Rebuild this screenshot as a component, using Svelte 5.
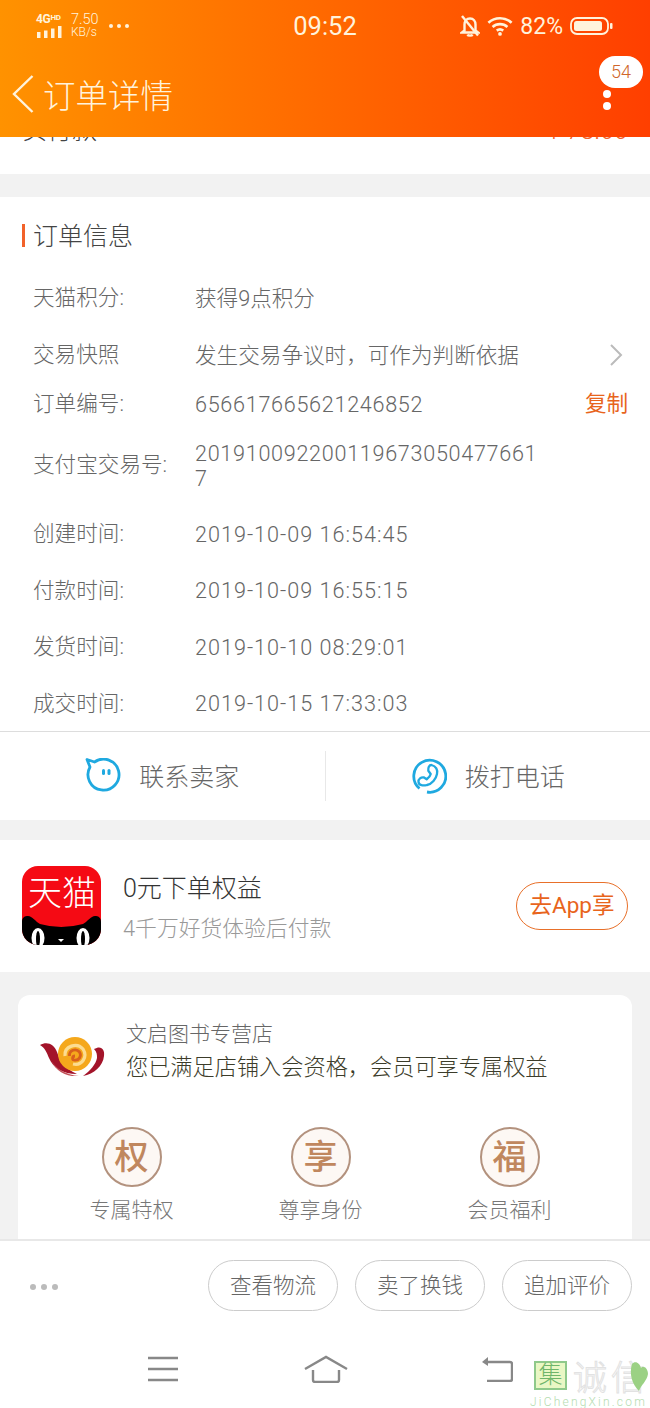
<script>
	const rows = [
		{ label: "天猫积分:", value: "获得9点积分" },
		{ label: "交易快照", value: "发生交易争议时，可作为判断依据", arrow: true, size: "snap" },
		{ label: "订单编号:", value: "656617665621246852", copy: true, kind: "num", size: "short" },
		{ label: "支付宝交易号:", value: "2019100922001196730504776617", kind: "num", size: "tall" },
		{ label: "创建时间:", value: "2019-10-09 16:54:45", kind: "time", size: "timed" },
		{ label: "付款时间:", value: "2019-10-09 16:55:15", kind: "time", size: "timed" },
		{ label: "发货时间:", value: "2019-10-10 08:29:01", kind: "time", size: "timed" },
		{ label: "成交时间:", value: "2019-10-15 17:33:03", kind: "time", size: "timed" }
	];
	const perks = [
		{ glyph: "权", label: "专属特权" },
		{ glyph: "享", label: "尊享身份" },
		{ glyph: "福", label: "会员福利" }
	];
	const actions = ["查看物流", "卖了换钱", "追加评价"];
</script>

<div class="page">
	<header>
		<div class="status">
			<div class="status-left">
				<div class="net">
					<span class="net-type">4G<sup>HD</sup></span>
					<svg width="27" height="12" viewBox="0 0 27 12">
						<rect x="1" y="6" width="3.5" height="6" fill="#fff3dc" />
						<rect x="8" y="4.500" width="3.5" height="7.500" fill="#fff3dc" />
						<rect x="15" y="2.500" width="3.5" height="9.500" fill="#fff3dc" />
						<rect x="22" y="0" width="3.5" height="12" fill="#fff3dc" />
					</svg>
				</div>
				<div class="speed"><span>7.50</span><span class="unit">KB/s</span></div>
				<div class="status-dots"><i></i><i></i><i></i></div>
			</div>
			<div class="clock">09:52</div>
			<div class="status-right">
				<svg width="20" height="22" viewBox="0 0 20 22" fill="none" stroke="#fff3dc" stroke-width="2.400">
					<path d="M4.500 15.500V9.500C4.500 6 6.500 3.500 10 3.500S15.500 6 15.500 9.500V15.500L18 17.500H2Z" />
					<path d="M7.500 19.500C8 21 12 21 12.500 19.500" />
					<path d="M2 1L18 20.500" />
				</svg>
				<svg width="26" height="22" viewBox="0 0 28 22" fill="none" stroke="#fff3dc" stroke-width="2.800">
					<path d="M1.500 7.500C8.500 1 19.500 1 26.500 7.500" />
					<path d="M6 12C10.500 8 17.500 8 22 12" />
					<path d="M10.500 16C12.500 14.500 15.500 14.500 17.500 16" />
					<circle cx="14" cy="19.500" r="2" fill="#fff3dc" stroke="none" />
				</svg>
				<span class="pct">82%</span>
				<svg width="43" height="18" viewBox="0 0 43 18">
					<rect x="1" y="1" width="37" height="16" rx="6" fill="none" stroke="#fff3dc" stroke-width="1.800" />
					<rect x="4" y="4" width="28" height="10" rx="2.500" fill="#fff3dc" />
					<rect x="40" y="6" width="2.500" height="6" rx="1" fill="#fff3dc" />
				</svg>
			</div>
		</div>
		<div class="nav">
			<svg class="back" width="22" height="38" viewBox="0 0 22 38" fill="none" stroke="#fff3dc" stroke-width="2.400">
				<path d="M20.500 1L2 19L20.500 37" />
			</svg>
			<h1>订单详情</h1>
			<div class="more">
				<span class="badge">54</span>
				<i></i><i></i>
			</div>
		</div>
	</header>

	<div class="scroll">
		<div class="clipped">
			<div class="clipped-row"><span>实付款</span><span class="price">¥ 78.00</span></div>
		</div>

		<section class="info">
			<h2>订单信息</h2>
			{#each rows as row}
				<div class="row {row.size ?? ''}">
					<span class="label">{row.label}</span>
					<span class="value {row.kind ?? ''}">{row.value}</span>
					{#if row.copy}
						<span class="copy">复制</span>
					{/if}
					{#if row.arrow}
						<svg class="chev" width="14" height="24" viewBox="0 0 14 24" fill="none" stroke="#bbb" stroke-width="2">
							<path d="M2 2L12 12L2 22" />
						</svg>
					{/if}
				</div>
			{/each}
		</section>

		<section class="contact">
			<div class="contact-item">
				<svg width="36" height="36" viewBox="0 0 36 36" fill="none" stroke="#1fa9e0" stroke-width="2.800">
					<path d="M2 1.500L9.500 4A15.500 15.500 0 1 1 5 9Z" stroke-linejoin="round" />
					<rect x="17" y="11" width="3" height="6" rx="1.500" fill="#1fa9e0" stroke="none" />
					<rect x="22.500" y="11" width="3" height="6" rx="1.500" fill="#1fa9e0" stroke="none" />
				</svg>
				<span>联系卖家</span>
			</div>
			<div class="contact-item">
				<svg width="36" height="36" viewBox="0 0 36 36" fill="none" stroke="#1fa9e0" stroke-width="2.800">
					<path d="M8.500 30.500A16 16 0 1 1 16 34" />
					<path d="M20.500 7C25 8 27 12 26 16C25 21 21 26 16 27C12 28 8 27.500 7.500 24C7.200 21 10 19 13 19.500L15.700 21.300C17.500 20 19.300 18 19.700 16L17.300 12.700C17 10 18 7 20.500 7Z" stroke-width="2.300" stroke-linejoin="round" />
				</svg>
				<span>拨打电话</span>
			</div>
		</section>

		<section class="promo">
			<div class="tmall">
				<svg width="79" height="79" viewBox="0 0 79 79">
					<path d="M0 56C0 51 3 50 6 50C10 50 14 56 18 58Q39 64 61 58C65 56 69 50 73 50C76 50 79 51 79 56V79H0Z" fill="#000" />
					<ellipse cx="16" cy="72" rx="6.500" ry="10" fill="#fff" />
					<ellipse cx="61" cy="72" rx="6.500" ry="10" fill="#fff" />
					<ellipse cx="16" cy="73" rx="2" ry="8" fill="#000" />
					<ellipse cx="61" cy="73" rx="2" ry="8" fill="#000" />
					<path d="M36 73H42L39 76Z" fill="#fff" />
				</svg>
				<span>天猫</span>
			</div>
			<div class="promo-text">
				<div class="promo-title">0元下单权益</div>
				<div class="promo-sub">4千万好货体验后付款</div>
			</div>
			<div class="promo-btn">去App享</div>
		</section>

		<section class="member">
			<div class="store">
				<svg width="66" height="42" viewBox="0 0 66 42">
					<path d="M1 9C8 5 15 8 18 16C21 25 25 32 38 38C24 38 14 32 10 22C8 17 6 12 1 9Z" fill="#a3142a" />
					<path d="M12 24C17 33 27 39 40 40C28 41 17 36 12 24Z" fill="#c25058" />
					<path d="M55 13C62 9 66 13 65 20C64 30 55 38 44 40C51 35 57 28 58 22C58 19 58 16 55 13Z" fill="#a3142a" />
					<circle cx="36" cy="18" r="17" fill="#f5a81c" />
					<path d="M26 20C25 10 38 6 44 13C49 21 43 30 34 28" fill="none" stroke="#fcdc90" stroke-width="3.200" />
					<path d="M30.500 20C30 14 37 12 40.500 16C43 20 40 25 35 24C33 23.500 33 20 36 20" fill="none" stroke="#d9601c" stroke-width="2.800" />
				</svg>
				<div class="store-text">
					<div class="store-name">文启图书专营店</div>
					<div class="store-msg">您已满足店铺入会资格，会员可享专属权益</div>
				</div>
			</div>
			<div class="perks">
				{#each perks as perk}
					<div class="perk">
						<div class="perk-ring">{perk.glyph}</div>
						<div class="perk-label">{perk.label}</div>
					</div>
				{/each}
			</div>
		</section>
	</div>

	<footer>
		<div class="foot-dots"><i></i><i></i><i></i></div>
		<div class="foot-btns">
			{#each actions as action}
				<div class="foot-btn">{action}</div>
			{/each}
		</div>
	</footer>

	<div class="sysnav">
		<svg width="32" height="26" viewBox="0 0 32 26" stroke="#888" stroke-width="2.600">
			<path d="M1 2H31M1 13H31M1 24H31" />
		</svg>
		<svg width="44" height="28" viewBox="0 0 44 28" fill="none" stroke="#888" stroke-width="2.400">
			<path d="M1 14L22 2L43 14" />
			<path d="M9 15V25C9 26 10 27 11 27H33C34 27 35 26 35 25V15" />
		</svg>
		<svg width="32" height="26" viewBox="0 0 32 26" fill="none" stroke="#888" stroke-width="2.400">
			<path d="M5 6H29C30 6 31 7 31 8V23C31 24 30 25 29 25H6" />
			<path d="M1 6L7 1V10Z" fill="#888" stroke="none" />
		</svg>
	</div>

	<div class="mark">
		<div class="mark-top">
			<span class="mark-box">集</span>
			<span class="mark-word">诚信</span>
			<svg class="leaf" width="20" height="32" viewBox="0 0 20 32">
				<path d="M10 31C3 24 0 14 3 4C6 0 11 3 12 8C14 5 19 8 19 14C18 21 12 25 10 31Z" fill="#9bd184" />
			</svg>
		</div>
		<div class="mark-url">JiChengXin.com</div>
	</div>
</div>

<style>
	:global(body) {
		margin: 0;
		background: #fff;
	}

	.page {
		position: relative;
		display: flex;
		flex-direction: column;
		width: 650px;
		height: 1408px;
		overflow: hidden;
		font-family: Roboto, "Noto Sans CJK SC", sans-serif;
		font-weight: 300;
		color: #666;
	}

	header {
		flex: none;
		height: 137px;
		background: linear-gradient(90deg, #ff9200, #ff3f00);
		color: #fff3dc;
		position: relative;
		z-index: 1;
	}

	.status {
		display: flex;
		justify-content: space-between;
		align-items: center;
		height: 52px;
		padding: 0 36px;
		position: relative;
	}

	.status-left {
		display: flex;
		align-items: center;
		gap: 8px;
	}

	.net {
		display: flex;
		flex-direction: column;
		gap: 2px;
		width: 27px;
	}

	.net-type {
		font-size: 12px;
		font-weight: 700;
		line-height: 10px;
		white-space: nowrap;
		letter-spacing: -0.3px;
	}

	.net-type sup {
		font-size: 8px;
		line-height: 0;
		vertical-align: 3px;
	}

	.speed {
		display: flex;
		flex-direction: column;
		font-size: 14.500px;
		line-height: 12px;
	}

	.speed .unit {
		font-size: 12px;
	}

	.status-dots {
		display: flex;
		gap: 4px;
		margin-left: 2px;
	}

	.status-dots i {
		width: 4px;
		height: 4px;
		border-radius: 50%;
		background: #fff3dc;
	}

	.clock {
		position: absolute;
		left: 0;
		right: 0;
		text-align: center;
		font-size: 25.500px;
		font-weight: 400;
	}

	.status-right {
		display: flex;
		align-items: center;
		gap: 7px;
		margin-right: 1px;
	}

	.pct {
		font-size: 23px;
		font-weight: 400;
	}

	.nav {
		display: flex;
		align-items: center;
		height: 85px;
		padding-left: 12px;
		position: relative;
	}

	.back {
		margin-right: 9px;
		margin-top: -1px;
	}

	h1 {
		margin: -2px 0 0;
		font-size: 32.500px;
		font-weight: 300;
		white-space: nowrap;
	}

	.more {
		position: absolute;
		left: 603px;
		top: 38px;
	}

	.more i {
		display: block;
		width: 8px;
		height: 8px;
		border-radius: 50%;
		background: #fff;
		margin-bottom: 4px;
	}

	.badge {
		position: absolute;
		left: -4px;
		top: -34px;
		width: 44px;
		height: 32px;
		border-radius: 16px;
		background: #fff;
		color: #d0662a;
		font-size: 18px;
		line-height: 32px;
		text-align: center;
	}

	.scroll {
		flex: 1;
		min-height: 0;
		overflow: hidden;
		background: #f2f2f2;
	}

	.clipped {
		height: 37px;
		overflow: hidden;
		background: #fff;
		margin-bottom: 23px;
	}

	.clipped-row {
		display: flex;
		justify-content: space-between;
		margin-top: -21px;
		padding: 0 22px;
		font-size: 25px;
		line-height: 30px;
		color: #444;
	}

	.price {
		color: #f2622a;
	}

	.info {
		background: #fff;
		height: 534px;
	}

	h2 {
		display: flex;
		align-items: center;
		margin: 0;
		height: 73px;
		padding-left: 33px;
		font-size: 25px;
		font-weight: 300;
		color: #444;
		position: relative;
	}

	h2::before {
		content: "";
		position: absolute;
		left: 22px;
		top: 27px;
		width: 3px;
		height: 23px;
		background: #f2622a;
	}

	.row {
		display: flex;
		align-items: center;
		height: 56.500px;
		padding-left: 33px;
		font-size: 21.600px;
		line-height: 25px;
		position: relative;
	}

	.row.snap {
		height: 57px;
	}

	.row.short {
		height: 42px;
	}

	.row.tall {
		height: 80px;
	}

	.label {
		flex: none;
		width: 162px;
		white-space: nowrap;
		margin-top: -2px;
	}

	.row.timed .label {
		margin-top: 0;
	}

	.value {
		width: 345px;
		word-break: break-all;
		white-space: nowrap;
	}

	.value.num {
		white-space: normal;
		letter-spacing: 0.7px;
	}

	.value.time {
		letter-spacing: 1px;
		padding-top: 1px;
	}

	.copy {
		position: absolute;
		left: 585px;
		color: #e8641c;
		font-weight: 400;
		margin-top: -2px;
	}

	.chev {
		position: absolute;
		left: 609px;
	}

	.contact {
		display: flex;
		align-items: center;
		height: 88px;
		background: #fff;
		border-top: 1px solid #ddd;
		margin-bottom: 20px;
	}

	.contact-item {
		flex: 1;
		display: flex;
		align-items: center;
		justify-content: center;
		gap: 18px;
		height: 50px;
		font-size: 25px;
		color: #666;
		margin-top: -1px;
	}

	.contact-item span {
		margin-top: -2px;
	}

	.contact-item + .contact-item {
		border-left: 1px solid #e8e8e8;
	}

	.promo {
		display: flex;
		align-items: center;
		height: 132px;
		padding: 0 22px;
		background: #fff;
		margin-bottom: 23px;
	}

	.tmall {
		position: relative;
		flex: none;
		width: 79px;
		height: 79px;
		border-radius: 16px;
		background: #f50a14;
		overflow: hidden;
		margin-top: -1px;
		margin-right: 22px;
	}

	.tmall svg {
		position: absolute;
		left: 0;
		top: 0;
	}

	.tmall span {
		position: absolute;
		left: 6px;
		top: 6px;
		font-size: 34px;
		line-height: 42px;
		color: #fff;
		white-space: nowrap;
	}

	.promo-text {
		flex: 1;
		margin-top: 6px;
	}

	.promo-title {
		font-size: 25px;
		line-height: 32px;
		color: #333;
		margin-bottom: 8px;
	}

	.promo-sub {
		font-size: 21.800px;
		line-height: 32px;
		color: #999;
	}

	.promo-btn {
		flex: none;
		width: 112px;
		height: 48px;
		box-sizing: border-box;
		border: 1.500px solid #e8702a;
		border-radius: 24px;
		color: #e8641c;
		font-size: 22.500px;
		font-weight: 400;
		line-height: 45px;
		text-align: center;
	}

	.member {
		margin: 0 18px;
		background: #fff;
		border-radius: 12px;
		height: 300px;
	}

	.store {
		display: flex;
		align-items: center;
		padding: 24px 0 0 21px;
		height: 64px;
		gap: 21px;
	}

	.store svg {
		margin-top: 12px;
	}

	.store-name {
		font-size: 21px;
		line-height: 32px;
		color: #666;
	}

	.store-msg {
		font-size: 22.200px;
		line-height: 34px;
		color: #3c3c2a;
		white-space: nowrap;
	}

	.perks {
		display: grid;
		grid-template-columns: repeat(3, 189px);
		padding: 44px 0 0 19px;
	}

	.perk {
		display: flex;
		flex-direction: column;
		align-items: center;
	}

	.perk-ring {
		width: 60px;
		height: 60px;
		box-sizing: border-box;
		border: 2px solid #b3927e;
		border-radius: 50%;
		background: #fdf8f4;
		color: #c0875e;
		font-size: 34px;
		font-weight: 500;
		line-height: 57px;
		text-align: center;
	}

	.perk-label {
		margin-top: 9px;
		font-size: 21px;
		line-height: 28px;
		color: #777;
	}

	footer {
		flex: none;
		display: flex;
		justify-content: space-between;
		align-items: center;
		height: 98px;
		box-sizing: border-box;
		border-top: 2px solid #e8e8e8;
		background: #fff;
		padding: 0 18px 8px 30px;
	}

	.foot-dots {
		display: flex;
		gap: 5px;
		margin-top: 4px;
	}

	.foot-dots i {
		width: 6px;
		height: 6px;
		border-radius: 50%;
		background: #bbb;
	}

	.foot-btns {
		display: flex;
		gap: 17px;
	}

	.foot-btn {
		width: 130px;
		height: 51px;
		box-sizing: border-box;
		border: 1.500px solid #ccc;
		border-radius: 26px;
		font-size: 21.500px;
		line-height: 50px;
		text-align: center;
		color: #666;
	}

	.sysnav {
		flex: none;
		display: grid;
		grid-template-columns: 163px 163px 179px;
		justify-items: center;
		align-items: center;
		height: 70px;
		padding: 0 0 9px 81px;
		box-sizing: border-box;
		background: #fff;
		margin-top: 1px;
	}

	.mark {
		position: absolute;
		left: 530px;
		top: 1360px;
		width: 120px;
	}

	.mark-top {
		display: flex;
		align-items: center;
		height: 36px;
		position: relative;
	}

	.mark-box {
		width: 33px;
		height: 29px;
		margin-left: 4px;
		margin-top: -6px;
		box-sizing: border-box;
		border: 2px solid #8fc98a;
		background: #e9f7c4;
		color: #6fb56a;
		font-size: 24px;
		line-height: 25px;
		text-align: center;
	}

	.mark-word {
		margin-left: 6px;
		font-size: 34px;
		line-height: 34px;
		color: #fff;
		-webkit-text-stroke: 1px #e2e2e2;
		white-space: nowrap;
		letter-spacing: 4px;
	}

	.leaf {
		position: absolute;
		left: 99px;
		top: 0;
	}

	.mark-url {
		font-size: 12px;
		line-height: 12px;
		letter-spacing: 2.200px;
		color: #b5dcb0;
		white-space: nowrap;
	}
</style>
